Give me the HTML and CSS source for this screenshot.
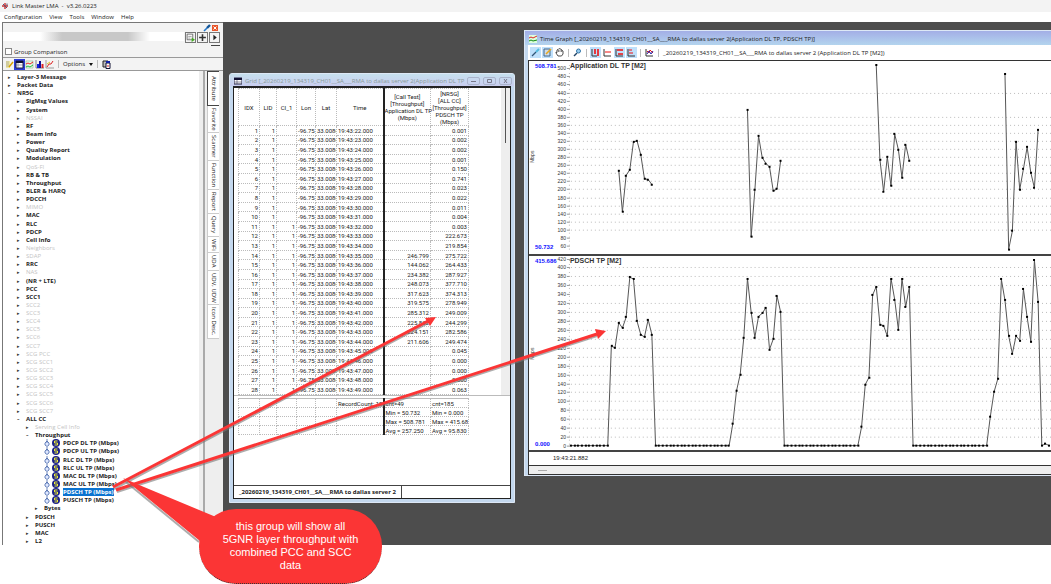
FILE: index.html
```html
<!DOCTYPE html>
<html lang="en">
<head>
    <meta charset="UTF-8">
    <meta name="viewport" content="width=device-width, initial-scale=1.0">
    <title>Link Master LMA</title>
    <link rel="stylesheet" href="styles.css">
</head>
<body>
    <header class="title-bar">
        <svg class="icon" viewBox="0 0 8 8"><path d="M1 4h6M4 1v6" stroke="#c33" stroke-width="1.4"/><path d="M2 2l4 4M6 1.5v2" stroke="#557"/></svg>
        <span>Link Master LMA &nbsp;- &nbsp;v3.26.0223</span>
    </header>
    <nav class="menu-bar">
        <button>Configuration</button>
        <button>View</button>
        <button>Tools</button>
        <button>Window</button>
        <button>Help</button>
    </nav>

    <main class="workspace">
        <aside class="sidebar">
            <div class="dock-header">
                <svg class="icon" viewBox="0 0 8 8"><path d="M1 7l3-3" stroke="#27c" stroke-width="1.6"/><path d="M4 4l3-3" stroke="#159" stroke-width="2.4"/></svg>
                <button class="dock-close" aria-label="Close panel"><svg viewBox="0 0 6 6"><path d="M1.5 1.5l3 3M4.5 1.5l-3 3" stroke="#fff"/></svg></button>
            </div>
            <div class="search-row">
                <div class="search-field"><input type="text" aria-label="Search item"><span class="smudge"></span></div>
                <button aria-label="Find"><svg viewBox="0 0 8 8"><path d="M1 1h5v5H1z" fill="#fff" stroke="#555" stroke-width=".7"/><path d="M2 3h3M2 4.5h2" stroke="#777" stroke-width=".6"/><path d="M5 4l3 2-3 2z" fill="#4a2"/></svg></button>
                <button aria-label="Expand"><svg viewBox="0 0 8 8"><path d="M4 1v6M1 4h6" stroke="#333" stroke-width="1.4"/></svg></button>
                <button aria-label="Next"><svg viewBox="0 0 8 8"><path d="M3 1.5l3 2.5-3 2.5z" fill="#222"/></svg></button>
            </div>
            <div class="grip"></div>
            <label class="compare"><input type="checkbox"> Group Comparison</label>
            <div class="tool-row">
                <button aria-label="Edit"><svg viewBox="0 0 9 9"><path d="M1 1h4v7H1z" fill="#f0e8a0"/><path d="M1 2h3M1 4h3M1 6h3" stroke="#999" stroke-width=".7"/><path d="M4 7l4-5" stroke="#d8a000" stroke-width="1.5"/></svg></button>
                <button class="pressed" aria-label="Grid"><svg viewBox="0 0 9 9"><path d="M1 1h7v7H1z" fill="#fff" stroke="#224"/><path d="M1 1h7v2H1z" fill="#113"/><path d="M1 5h7M3 3v5" stroke="#668" stroke-width=".6"/></svg></button>
                <button aria-label="Map"><svg viewBox="0 0 9 9"><path d="M1 1h7v7H1z" fill="#e8fbe8" stroke="#9b9" stroke-width=".6"/><path d="M1 4l2-1 2 1 3-2" stroke="#e22" fill="none"/><path d="M1 7l2-1 2 1 3-2" stroke="#2b4" fill="none"/></svg></button>
                <button aria-label="Bar chart"><svg viewBox="0 0 9 9"><path d="M1 0v8h8" stroke="#555" fill="none" stroke-width=".7"/><path d="M2 4h2v4H2z" fill="#12d"/><path d="M4 1h2v7H4z" fill="#119"/><path d="M6.5 4h2v4h-2z" fill="#d22"/></svg></button>
                <button aria-label="Line chart"><svg viewBox="0 0 9 9"><path d="M1 0v8h8" stroke="#777" fill="none" stroke-width=".7"/><path d="M2 7l2-3 2 0 2-3" stroke="#d22" fill="none"/><path d="M2 4l3-2" stroke="#dc2"/></svg></button>
                <span class="sep"></span>
                <button class="options">Options <i class="caret"></i></button>
                <span class="sep"></span>
                <button aria-label="Copy"><svg viewBox="0 0 9 9"><path d="M1 1h5v6H1z" fill="#bbb" stroke="#222"/><path d="M4 3h4v5.5H4z" fill="#fff" stroke="#113"/><path d="M4 1h4v2H4z" fill="#12a"/><path d="M5 6h2" stroke="#d22"/></svg></button>
            </div>
            <div class="tree-area">
                <ul class="tree" id="tree"></ul>
                <div class="tree-scroll"></div>
                <div class="side-tabs">
                    <button class="active">Attribute</button>
                    <button>Favorite</button>
                    <button>Scanner</button>
                    <button>Function</button>
                    <button>Report</button>
                    <button>Query</button>
                    <button>WiFi</button>
                    <button>UDA</button>
                    <button>UDV, UDW</button>
                    <button>Icon Desc.</button>
                </div>
            </div>
        </aside>

        <section class="desktop">
            <article class="window grid-window">
                <div class="window-title faded">
                    <svg class="icon" viewBox="0 0 8 8"><path d="M0 1h8v6H0z" fill="#fff" stroke="#224"/><path d="M0 1h8v2H0z" fill="#113"/><path d="M3 3v4M0 5h8" stroke="#446" stroke-width=".6"/></svg>
                    <span class="caption">Grid [_20260219_134319_CH01__SA___RMA to dallas server 2(Application DL TP</span>
                    <div class="window-buttons">
                        <button aria-label="Minimize"><svg viewBox="0 0 9 6"><path d="M2 3.5h5" stroke="#778"/></svg></button>
                        <button aria-label="Maximize"><svg viewBox="0 0 9 6"><path d="M2.5 1.5h4v3h-4z" fill="none" stroke="#778"/></svg></button>
                        <button aria-label="Close"><svg viewBox="0 0 9 6"><path d="M3 1l3 4M6 1L3 5" stroke="#778"/></svg></button>
                    </div>
                </div>
                <div class="grid-frame">
                    <div class="grid-scroller">
                        <table class="data-table">
                            <colgroup><col class="c-idx"><col class="c-lid"><col class="c-ci"><col class="c-lon"><col class="c-lat"><col class="c-time"><col class="c-app"><col class="c-pdsch"></colgroup>
                            <thead>
                                <tr>
                                    <th>IDX</th><th>LID</th><th>CI_1</th><th>Lon</th><th>Lat</th><th>Time</th>
                                    <th class="metric">[Call Test]<br>[Throughput]<br>Application DL TP<br>(Mbps)</th>
                                    <th>[NR5G]<br>[ALL CC]<br>[Throughput]<br>PDSCH TP<br>(Mbps)</th>
                                </tr>
                            </thead>
                            <tbody id="rows"></tbody>
                        </table>
                        <div class="grid-bar"></div>
                    </div>
                    <table class="data-table summary">
                        <colgroup><col class="c-idx"><col class="c-lid"><col class="c-ci"><col class="c-lon"><col class="c-lat"><col class="c-time"><col class="c-app"><col class="c-pdsch"></colgroup>
                        <tbody>
                            <tr><td></td><td></td><td></td><td></td><td></td><td class="left">RecordCount: 185</td><td class="metric left">cnt=49</td><td class="left">cnt=185</td></tr>
                            <tr><td></td><td></td><td></td><td></td><td></td><td></td><td class="metric left">Min = 50.732</td><td class="left">Min = 0.000</td></tr>
                            <tr><td></td><td></td><td></td><td></td><td></td><td></td><td class="metric left">Max = 508.781</td><td class="left">Max = 415.686</td></tr>
                            <tr><td></td><td></td><td></td><td></td><td></td><td></td><td class="metric left">Avg = 257.250</td><td class="left">Avg = 95.830</td></tr>
                        </tbody>
                    </table>
                    <div class="sheet-tabs"><button>_20260219_134319_CH01__SA___RMA to dallas server 2</button></div>
                </div>
            </article>

            <article class="window graph-window">
                <div class="window-title">
                    <svg class="icon" viewBox="0 0 8 8"><path d="M0 0h8v8H0z" fill="#dfd"/><path d="M0 3l2-1 2 1 4-2" stroke="#d22" fill="none"/><path d="M0 6l2-1 2 1 4-1" stroke="#181" fill="none"/></svg>
                    <span class="caption">Time Graph [_20260219_134319_CH01__SA___RMA to dallas server 2(Application DL TP, PDSCH TP)]</span>
                </div>
                <div class="graph-tools">
                    <button class="on" aria-label="Settings"><svg viewBox="0 0 9 9"><path d="M1 8l4-4" stroke="#357" stroke-width="1.3"/><path d="M5 4l3-3" stroke="#5bd" stroke-width="2"/></svg></button>
                    <button class="on" aria-label="Edit"><svg viewBox="0 0 9 9"><path d="M1 1h6v7H1z" fill="#cde" stroke="#468"/><path d="M3 6l5-5" stroke="#e9a820" stroke-width="1.6"/></svg></button>
                    <button aria-label="Pan"><svg viewBox="0 0 9 9"><path d="M3 8L1 5V4l1 .5V2l1-.5L3.500 1l1-.5L5.500 1l1 .5.5 1 1 .5v3L6.500 8z" fill="#fff" stroke="#222" stroke-width=".8"/><path d="M3.500 2v2M5 1.500V4M6.500 2v2" stroke="#333" stroke-width=".6"/></svg></button>
                    <span class="sep"></span>
                    <button aria-label="Zoom"><svg viewBox="0 0 9 9"><path d="M1 8l3-3" stroke="#246" stroke-width="1.4"/><circle cx="5.5" cy="3" r="2" fill="#9ce" stroke="#37a"/></svg></button>
                    <span class="sep"></span>
                    <button class="on" aria-label="Vertical marker"><svg viewBox="0 0 9 9"><path d="M1 1v7h5" stroke="#333" fill="none"/><path d="M4 1v5M7 1v7" stroke="#e11" stroke-width="1.6"/></svg></button>
                    <button aria-label="Horizontal marker"><svg viewBox="0 0 9 9"><path d="M1 1v7h7" stroke="#333" fill="none"/><path d="M2 4h6" stroke="#e11"/></svg></button>
                    <button class="on" aria-label="Split"><svg viewBox="0 0 9 9"><path d="M1 1v7h7" stroke="#333" fill="none"/><path d="M2 2h6M3 6h5" stroke="#e11" stroke-width="1.6"/></svg></button>
                    <button class="on" aria-label="Align"><svg viewBox="0 0 9 9"><path d="M1 1v7h7" stroke="#333" fill="none"/><path d="M2 2h3M2 5h4" stroke="#e11"/></svg></button>
                    <span class="sep"></span>
                    <button aria-label="Series"><svg viewBox="0 0 9 9"><path d="M1 1v7h7" stroke="#333" fill="none"/><path d="M2 3l2 2 1-3 3 3" stroke="#e11" fill="none"/><path d="M2 6l2-3 2 3 2-3" stroke="#22a" fill="none"/></svg></button>
                    <span class="sep"></span>
                    <span>_20260219_134319_CH01__SA___RMA to dallas server 2 (Application DL TP [M2])</span>
                </div>
                <div class="plots">
                    <svg class="plot" id="plot-app" viewBox="0 0 523 193" preserveAspectRatio="xMinYMin meet"></svg>
                    <svg class="plot" id="plot-pdsch" viewBox="0 0 523 195" preserveAspectRatio="xMinYMin meet"></svg>
                    <div class="time-axis">19:43:21.882</div>
                    <div class="time-scroll"></div>
                </div>
            </article>
        </section>
    </main>

    <svg class="arrows" viewBox="0 0 1051 584">
        <path class="arrow-shadow" d="M114 489L428 323M117 492L597 336"/>
        <path class="arrow-line" d="M113 487L428 321M116 490L597 334"/>
        <path class="arrow-head" d="M436 317L425 318L430 326ZM606 331L595 329L598 339Z"/>
        <path class="arrow-shadow" d="M126 482L199 542"/>
        <path class="arrow-head" d="M123 478L144 487L216 517L230 550L200 541Z"/>
    </svg>
    <div class="callout">this group will show all<br>5GNR layer throughput with<br>combined PCC and SCC<br>data</div>

    <script src="script.js"></script>
</body>
</html>
```
FILE: styles.css
```css
* {
    box-sizing: border-box;
}

body {
    margin: 0;
    height: 100vh;
    padding-bottom: 39px;
    display: flex;
    flex-direction: column;
    overflow: hidden;
    position: relative;
    background: #fff;
    color: #222;
    font-family: "Open Sans", "Noto Sans", sans-serif;
    font-size: 6px;
    line-height: 8px;
}

button {
    margin: 0;
    padding: 0;
    border: none;
    background: none;
    color: inherit;
    font: inherit;
}

button svg {
    display: block;
    width: 9px;
    height: 9px;
}

.icon {
    width: 8px;
    height: 8px;
    flex: none;
}

.title-bar {
    display: flex;
    align-items: center;
    gap: 3px;
    height: 12px;
    padding-left: 1px;
    background: #f3f3f3;
}

.menu-bar {
    display: flex;
    align-items: center;
    gap: 7px;
    height: 10px;
    padding-left: 4px;
}

.workspace {
    flex: 1;
    min-height: 0;
    display: flex;
}

/* left dock */
.sidebar {
    width: 223px;
    flex: none;
    display: flex;
    flex-direction: column;
    border: solid #777;
    border-width: 1px 2px 0 1px;
    margin-left: 2px;
    margin-right: -2px;
    background: #f3f3f3;
}

.dock-header {
    display: flex;
    justify-content: flex-end;
    align-items: center;
    gap: 1px;
    height: 9px;
    padding-right: 5px;
}

.dock-close {
    background: #e8562a;
}

.dock-close svg {
    width: 6px;
    height: 6px;
}

.search-row {
    display: flex;
    gap: 1px;
    height: 11px;
    padding-right: 3px;
}

.search-row button {
    width: 11px;
    border: 1px solid #777;
    background: #f3f3f3;
}

.search-field {
    flex: 1;
    position: relative;
    display: flex;
}

.search-field input {
    width: 100%;
    height: 9px;
    border: none;
    padding: 0 2px;
    font: inherit;
}

.smudge {
    position: absolute;
    inset: 0 34px 2px 37px;
    background: linear-gradient(90deg, #fff0, #c8c8c8 20%, #c8c8c8 80%, #fff0);
}

.grip {
    height: 3px;
    align-self: flex-end;
    width: 9px;
    margin-right: 3px;
    border-bottom: 1px solid #444;
}

.compare {
    display: flex;
    align-items: center;
    gap: 2px;
    height: 12px;
    padding-left: 2px;
    border-bottom: 1px solid #999;
}

.compare input {
    appearance: none;
    width: 7px;
    height: 7px;
    margin: 0;
    border: 1px solid #888;
    background: #fff;
}

.tool-row {
    display: flex;
    align-items: center;
    gap: 1px;
    height: 12px;
    padding-left: 2px;
}

.tool-row .pressed {
    background: #2c3cd8;
    outline: 1px solid #2c3cd8;
}

.sep {
    width: 1px;
    height: 8px;
    margin: 0 3px;
    background: #bbb;
}

.options {
    display: flex;
    align-items: center;
    gap: 4px;
}

.caret {
    border: 2px solid transparent;
    border-top: 3px solid #111;
    border-bottom: none;
}

.tree-area {
    flex: 1;
    min-height: 0;
    display: flex;
    border-top: 1px solid #999;
}

.tree {
    flex: 1;
    margin: 0;
    padding: 2px 0 0;
    list-style: none;
    display: grid;
    grid-auto-rows: 1fr;
    background: #fff;
    font-weight: 700;
}

.tree li {
    min-height: 0;
    display: flex;
    align-items: center;
    padding-left: 5px;
    white-space: nowrap;
}

.tree li::before {
    content: "▸";
    width: 9px;
    color: #333;
    font-family: "DejaVu Sans", sans-serif;
    font-size: 5px;
}

.tree .open::before {
    content: "–";
}

.tree .leaf::before {
    content: "";
}

.tree .depth-1 {
    padding-left: 14px;
}

.tree .depth-2 {
    padding-left: 23px;
}

.tree .depth-3 {
    padding-left: 32px;
}

.tree .muted span {
    color: #c4c4c4;
    font-weight: 400;
}

.tree .leaf svg {
    width: 17px;
    height: 8px;
    margin-right: 2px;
}

.tree .selected span {
    background: #0b73d0;
    color: #fff;
}

.tree-scroll {
    width: 6px;
    border-right: 2px solid #aaa;
    background: #eee;
}

.side-tabs {
    width: 18px;
    flex: none;
    display: flex;
    flex-direction: column;
    align-items: flex-end;
    padding-right: 4px;
    background: #eee;
}

.side-tabs button {
    width: 12px;
    padding: 2px 0;
    border: solid #ccc;
    border-width: 0 0 1px 1px;
    background: #fff;
    writing-mode: vertical-rl;
    line-height: 11px;
}

.side-tabs .active {
    padding: 4px 0;
    border: 1px solid #444;
    border-right: none;
}

/* windows */
.desktop {
    flex: 1;
    position: relative;
    overflow: hidden;
    background: #4d4d4d;
}

.window {
    position: absolute;
    display: flex;
    flex-direction: column;
    background: #c4d8ee;
    border: 1px solid #dde8f6;
}

.grid-window {
    left: 6px;
    top: 51px;
    width: 286px;
    height: 430px;
    padding: 0 3px 3px;
    border-radius: 3px 3px 0 0;
}

.graph-window {
    left: 301px;
    right: 0;
    top: 8px;
    height: 446px;
    padding: 0 0 3px 3px;
    border-right: none;
}

.window-title {
    display: flex;
    align-items: center;
    gap: 3px;
    height: 14px;
    flex: none;
    white-space: nowrap;
}

.graph-window .window-title {
    margin-left: -3px;
    padding: 2px 0 0 4px;
    background: linear-gradient(#a3aee6, #b3d4ee);
}

.grid-window .window-title {
    height: 12px;
    margin: 0 -3px;
    padding: 2px 3px 0 4px;
    background: linear-gradient(#c6e0ee, #c9cdf0);
}

.faded .caption {
    color: #899;
}

.caption {
    flex: 1;
}

.window-buttons {
    display: flex;
    gap: 3px;
}

.window-buttons button {
    width: 13px;
    height: 8px;
    padding-left: 1px;
    border: 1px solid #aab4cc;
    border-radius: 2px;
}

.window-buttons svg {
    height: 6px;
}

.grid-frame {
    flex: 1;
    min-height: 0;
    display: flex;
    flex-direction: column;
    border: 1px solid #222;
    border-top-width: 2px;
    background: #fff;
}

.grid-scroller {
    height: 308px;
    display: flex;
    justify-content: space-between;
    padding-left: 4px;
    border-bottom: 1px solid #bbb;
}

.grid-bar {
    width: 9px;
    border-left: 4px solid #eee;
    border-right: 4px solid #eee;
    background: linear-gradient(#555 55px, #eee 55px);
}

.data-table {
    width: 230px;
    height: 100%;
    table-layout: fixed;
    border-collapse: collapse;
    line-height: 7px;
    font-family: Roboto, sans-serif;
}

.summary {
    height: 37px;
    margin: 2px 0 0 4px;
    border-top: 1px solid #bbb;
}

.c-idx { width: 21px; }
.c-lid { width: 17px; }
.c-ci { width: 20px; }
.c-lon { width: 19px; }
.c-lat { width: 21px; }
.c-time { width: 47px; }
.c-app { width: 47px; }
.c-pdsch { width: 38px; }

.data-table td,
.data-table th {
    padding: 0 1px;
    border: 1px dotted #bbb;
    overflow: hidden;
    white-space: nowrap;
    text-align: right;
    font-weight: 400;
}

.data-table th {
    height: 37px;
    overflow: visible;
    padding: 0;
    text-align: center;
}

.data-table .left {
    text-align: left;
}

.data-table .metric {
    border-left: 2px solid #222;
}

.sheet-tabs {
    margin-top: auto;
    height: 13px;
    display: flex;
    border-top: 1px solid #444;
}

.sheet-tabs button {
    padding: 0 5px;
    border-right: 1px solid #444;
    font-weight: 700;
}

.graph-tools {
    display: flex;
    align-items: center;
    gap: 3px;
    height: 15px;
    flex: none;
    padding-left: 3px;
    background: #fff;
    white-space: nowrap;
}

.graph-tools .sep {
    margin: 0 1px;
}

.graph-tools .on {
    background: #bfe0fb;
    outline: 1px solid #bfe0fb;
}

.plots {
    flex: 1;
    display: flex;
    flex-direction: column;
    border: solid #333;
    border-width: 1px 0 1px 1px;
    background: #fff;
}

.plot {
    display: block;
    width: 100%;
    flex: none;
    border-bottom: 2px solid #444;
}

.plot text {
    font-family: "Liberation Sans", sans-serif;
    fill: #333;
    font-size: 5px;
}

.plot .plot-title {
    font-size: 7px;
    font-weight: 700;
}

.plot .limit {
    font-size: 6px;
    font-weight: 700;
    fill: #11f;
}

.plot .grid-line {
    stroke: #bbb;
    stroke-dasharray: 1 3;
}

.plot .series {
    fill: none;
    stroke: #555;
    stroke-width: 1;
}

.plot .dot {
    fill: #000;
}

.time-axis {
    flex: 1;
    padding-left: 24px;
    font-family: "Liberation Sans", sans-serif;
    line-height: 13px;
}

.time-scroll {
    height: 9px;
    border-top: 1px solid #333;
    background: linear-gradient(#aaa, #aaa) 9px 4px / 9px 1px no-repeat #eee;
}

/* annotations */
.arrows {
    position: absolute;
    left: 0;
    top: 0;
    width: 1051px;
    height: 584px;
    pointer-events: none;
}

.arrow-line {
    stroke: #fb3535;
    stroke-width: 3;
}

.arrow-shadow {
    stroke: #777;
    stroke-width: 2;
    opacity: 0.6;
}

.arrow-head {
    fill: #fb3535;
}

.callout {
    position: absolute;
    left: 199px;
    top: 509px;
    width: 183px;
    height: 75px;
    padding-top: 11px;
    border-bottom: 1px dotted #333;
    border-radius: 37px;
    background: #fb3535;
    color: #fff;
    font-family: "Liberation Sans", sans-serif;
    font-size: 11px;
    line-height: 13px;
    text-align: center;
}
```
FILE: script.js
```js
// [depth, label, flags]  m = muted, o = open, l = leaf, s = selected
const treeItems = [
    [0, 'Layer-3 Message'], [0, 'Packet Data'], [0, 'NR5G', 'o'],
    [1, 'SigMsg Values'], [1, 'System'], [1, 'NSSAI', 'm'], [1, 'RF'], [1, 'Beam Info'],
    [1, 'Power'], [1, 'Quality Report'], [1, 'Modulation'], [1, 'QoS-FI', 'm'],
    [1, 'RB & TB'], [1, 'Throughput'], [1, 'BLER & HARQ'], [1, 'PDCCH'], [1, 'MIMO', 'm'],
    [1, 'MAC'], [1, 'RLC'], [1, 'PDCP'], [1, 'Cell Info'], [1, 'Neighbors', 'm'],
    [1, 'SDAP', 'm'], [1, 'RRC'], [1, 'NAS', 'm'], [1, '(NR + LTE)'], [1, 'PCC'], [1, 'SCC1'],
    [1, 'SCC2', 'm'], [1, 'SCC3', 'm'], [1, 'SCC4', 'm'], [1, 'SCC5', 'm'], [1, 'SCC6', 'm'],
    [1, 'SCC7', 'm'], [1, 'SCG PCC', 'm'], [1, 'SCG SCC1', 'm'], [1, 'SCG SCC2', 'm'],
    [1, 'SCG SCC3', 'm'], [1, 'SCG SCC4', 'm'], [1, 'SCG SCC5', 'm'], [1, 'SCG SCC6', 'm'],
    [1, 'SCG SCC7', 'm'], [1, 'ALL CC', 'o'], [2, 'Serving Cell Info', 'm'], [2, 'Throughput', 'o'],
    [3, 'PDCP DL TP (Mbps)', 'l'], [3, 'PDCP UL TP (Mbps)', 'l'], [3, 'RLC DL TP (Mbps)', 'l'],
    [3, 'RLC UL TP (Mbps)', 'l'], [3, 'MAC DL TP (Mbps)', 'l'], [3, 'MAC UL TP (Mbps)', 'l'],
    [3, 'PDSCH TP (Mbps)', 'ls'], [3, 'PUSCH TP (Mbps)', 'l'], [3, 'Bytes'],
    [2, 'PDSCH'], [2, 'PUSCH'], [2, 'MAC'], [2, 'L2']
];

const flagNames = { m: 'muted', o: 'open', l: 'leaf', s: 'selected' };
const leafIcon = `<svg viewBox="0 0 17 8"><path d="M3 0v4M1 4l2-2 2 2v2L3 7.500 1 6z" fill="#dfe8ff" stroke="#46a" stroke-width=".8"/><circle cx="12" cy="4" r="4" fill="#1a1f8a"/><path d="M13.500 2h-3v2h3v2h-3" fill="none" stroke="#ee3"/></svg>`;

document.getElementById('tree').innerHTML = treeItems.map(([depth, label, flags = '']) => {
    const names = [...flags].map(f => flagNames[f]).join(' ');
    return `<li class="depth-${depth} ${names}">${flags.includes('l') ? leafIcon : ''}<span>${label.replace('&', '&amp;')}</span></li>`;
}).join('');

// Grid rows
const appTp = ['246.799', '144.062', '234.382', '248.073', '317.623', '319.575', '285.312', '225.832', '224.151', '211.606'];
const pdschTp = ['0.001', '0.002', '0.002', '0.001', '0.150', '0.741', '0.023', '0.022', '0.011', '0.004', '0.003',
    '222.673', '219.854', '275.722', '264.433', '287.927', '377.710', '374.313', '278.949', '249.009', '244.299',
    '282.586', '249.474', '0.045', '0.000', '0.000', '0.000', '0.063'];

document.getElementById('rows').innerHTML = pdschTp.map((value, i) => `
    <tr><td>${i + 1}</td><td>1</td><td>${i >= 10 ? 1 : ''}</td><td>-96.75</td><td class="left">33.0086</td>
    <td class="left">19:43:${22 + i}.000</td><td class="metric">${appTp[i - 13] || ''}</td><td>${value}</td></tr>`).join('');

// Plots: each series is a run of samples starting at an index
const zeros = n => Array(n).fill(0);
const appRuns = [
    [13, appTp.map(Number)],
    [48, [396, 82, 198, 332, 278, 264, 255, 196, 200, 270]],
    [83, [508.8, 274, 194, 280, 208, 337, 298, 229, 311, 270]],
    [118, [486, 50.7, 96, 317, 199, 250, 304, 241, 203, 347]]
];
const pdschRuns = [[0, [
    ...zeros(11), 223, 220, 276, 264, 288, 378, 374, 279, 249, 244, 283, 249,
    ...zeros(21), 49, 123, 160, 242, 375, 299, 243, 290, 297, 310, 216, 239, 337, 300,
    ...zeros(21), 42, 137, 153, 338, 357, 272, 269, 246, 375, 328, 260, 375, 311, 357,
    ...zeros(21), 65, 120, 149, 373, 326, 246, 207, 246, 236, 351, 288, 234, 415.7, 323,
    0, 4, 0
]]];

function drawPlot(id, plot) {
    const x = i => 42 + i * 3.686;
    const y = v => plot.base - v * plot.scale;
    let out = '';
    for (let v = plot.from; v <= plot.to; v += 20) {
        const py = Math.round(y(v));
        out += `<text x="37" y="${py + 2}" text-anchor="end">${v}</text><path d="M38 ${py + 0.5}h3" stroke="#999"/>`;
        if (!plot.skip.includes(v)) out += `<path class="grid-line" d="M42 ${py + 0.5}H523"/>`;
    }
    out += `<path class="grid-line" d="M40.500 4V${plot.bottom}"/>`;
    for (const [start, values] of plot.runs) {
        const pts = values.map((v, i) => [x(start + i), y(v)]);
        out += `<polyline class="series" points="${pts.map(p => p.map(n => n.toFixed(1)).join()).join(' ')}"/>`;
        out += pts.map(([px, py]) => `<rect class="dot" x="${Math.round(px - 1)}" y="${Math.round(py - 1)}" width="2" height="2"/>`).join('');
    }
    out += `<text class="plot-title" x="41" y="7">${plot.title}</text>`;
    out += `<text class="limit" x="6" y="7">${plot.max}</text><text class="limit" x="6" y="${plot.minY}">${plot.min}</text>`;
    out += `<text transform="translate(5 ${plot.unitY}) rotate(-90)">Mbps</text>`;
    document.getElementById(id).innerHTML = out;
}

drawPlot('plot-app', {
    title: 'Application DL TP [M2]', max: '508.781', min: '50.732', minY: 188, unitY: 102,
    from: 60, to: 500, base: 209.2, scale: 0.4038, bottom: 191, skip: [60, 80, 400, 420, 460, 480, 500], runs: appRuns
});
drawPlot('plot-pdsch', {
    title: 'PDSCH TP [M2]', max: '415.686', min: '0.000', minY: 190, unitY: 104,
    from: 0, to: 420, base: 190, scale: 0.4464, bottom: 192, skip: [0, 340, 420], runs: pdschRuns
});
```
